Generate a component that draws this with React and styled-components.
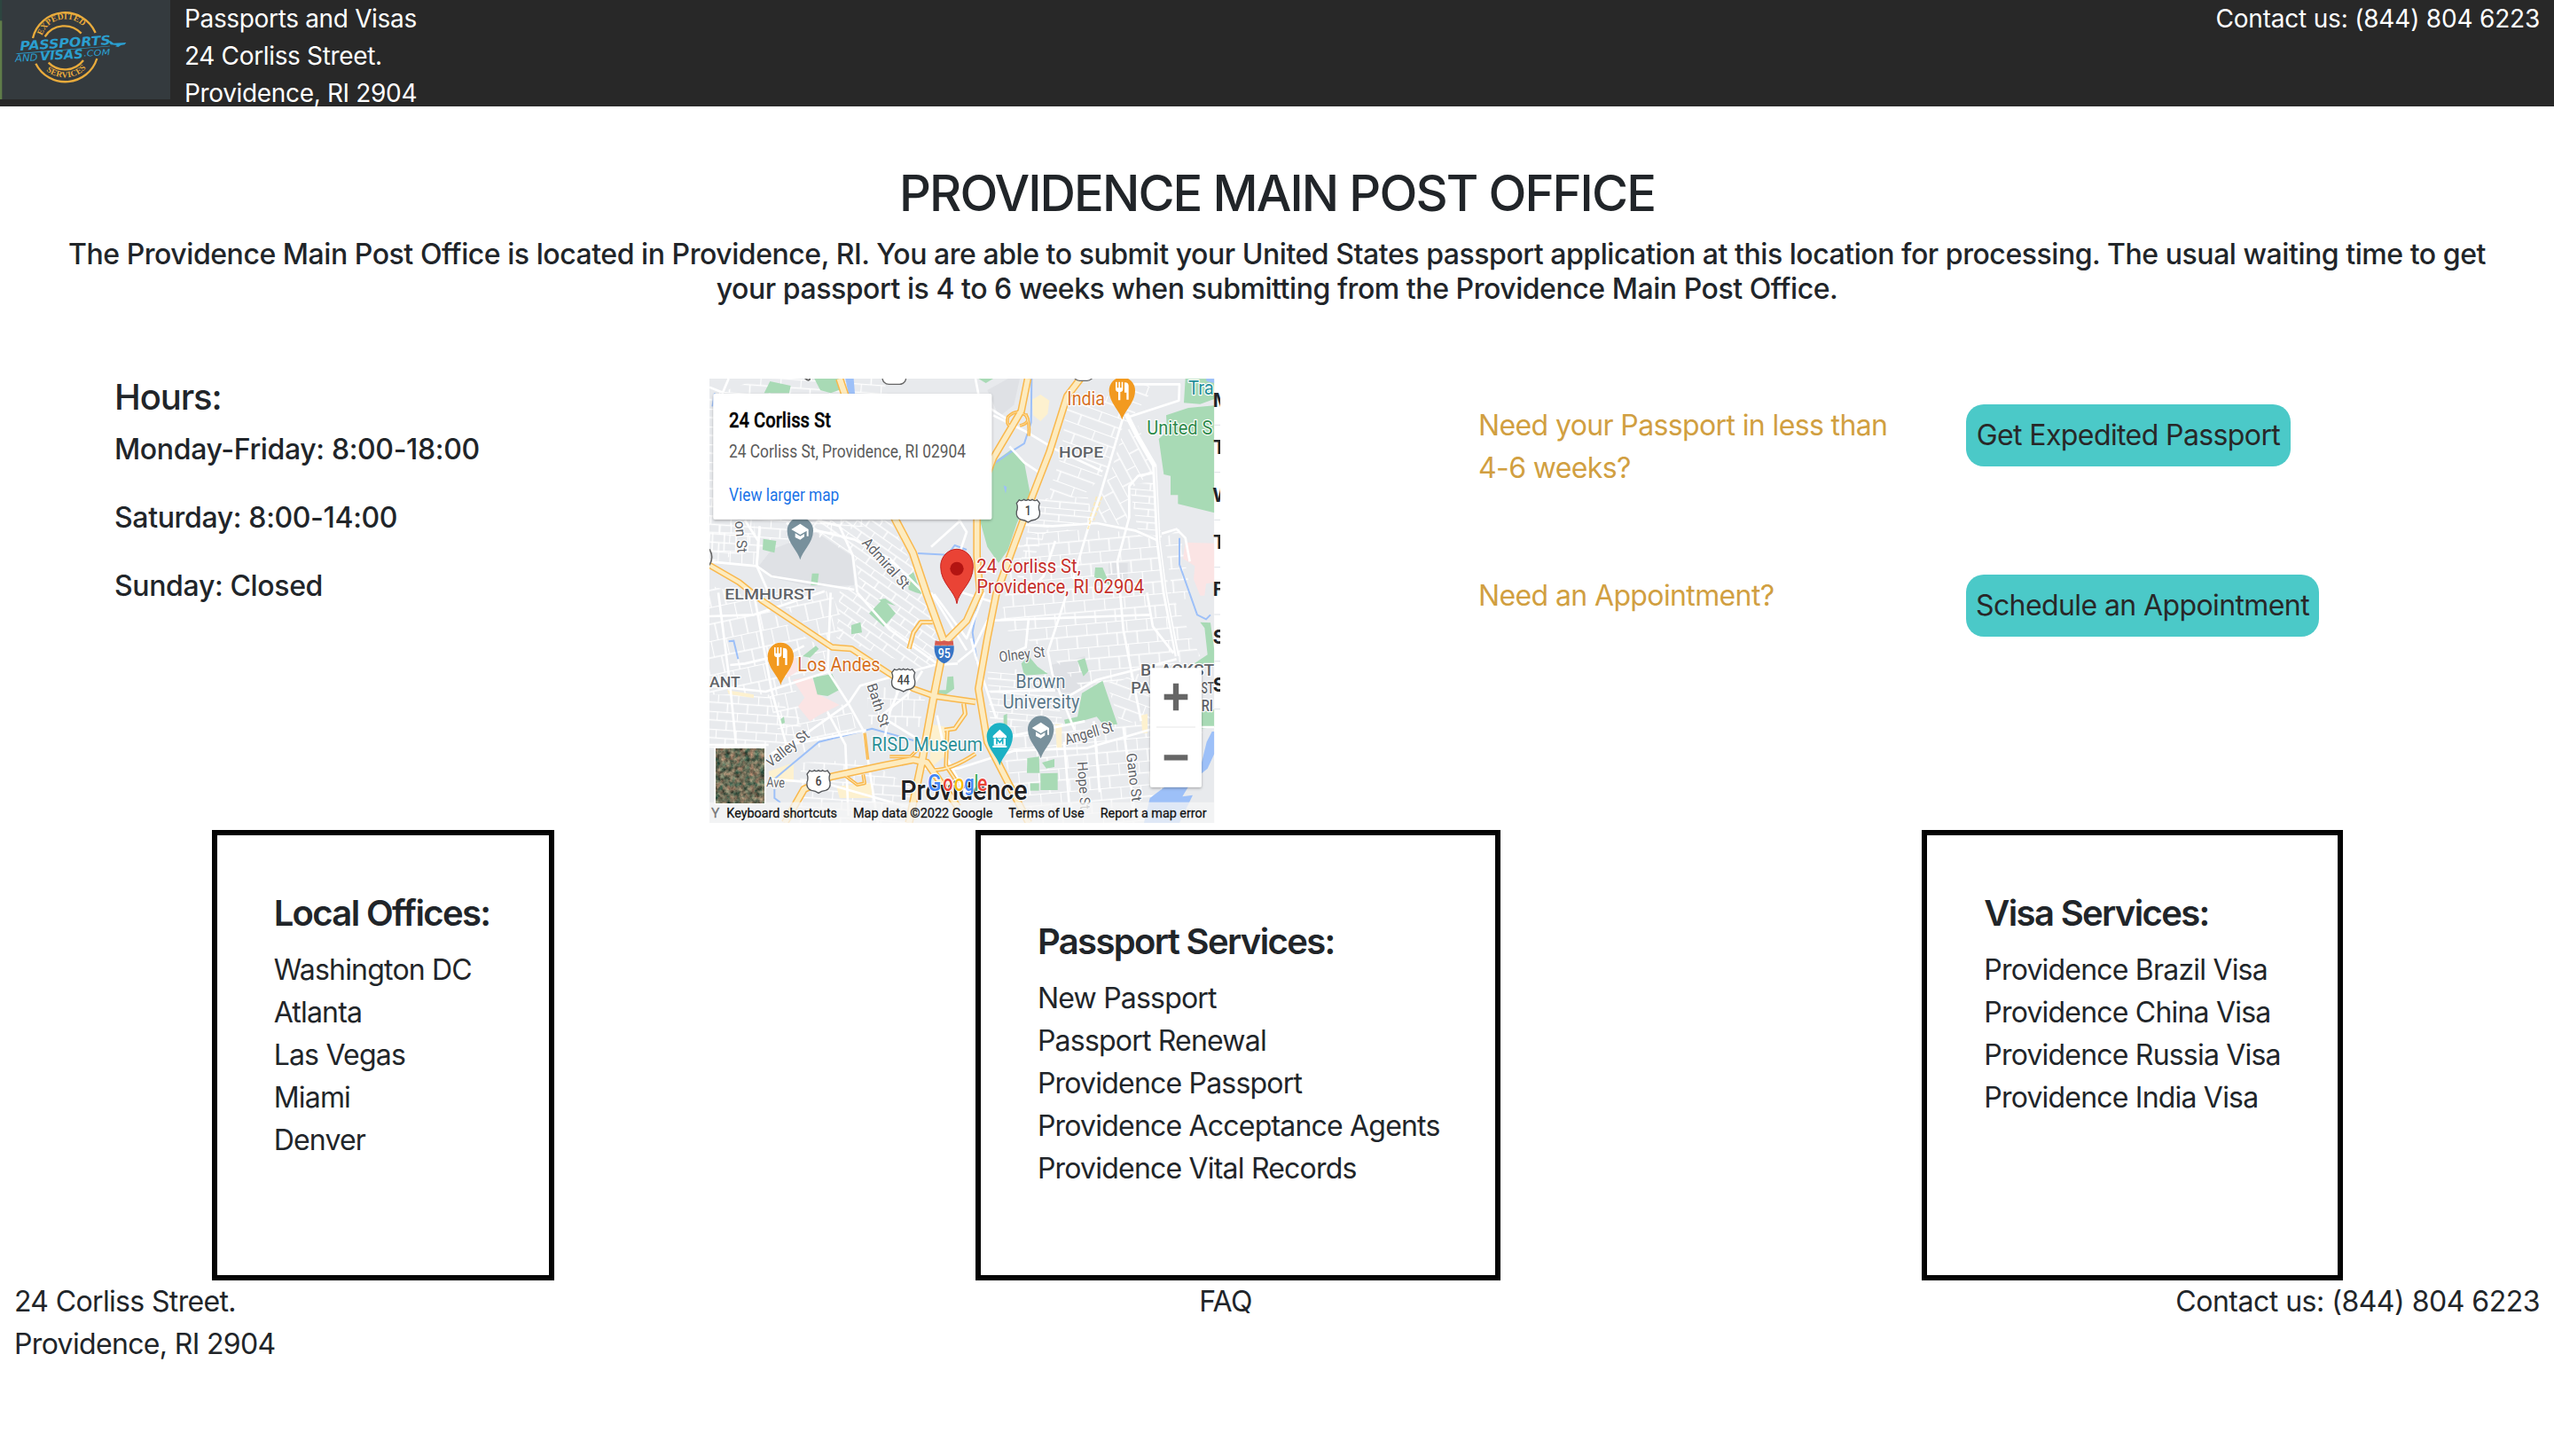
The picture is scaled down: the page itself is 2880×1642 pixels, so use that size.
import React from "react";
import styled, { createGlobalStyle } from "styled-components";

const GlobalStyle = createGlobalStyle`
  *, *::before, *::after { box-sizing: border-box; }
  body {
    margin: 0;
    background: #fff;
    color: #212529;
    font-family: Inter, "Liberation Sans", sans-serif;
    font-size: 32px;
    line-height: 1.5;
    letter-spacing: -0.6px;
  }
  h1, h2, h3, p, ul { margin: 0; padding: 0; font-weight: inherit; }
`;

const Header = styled.header`
  display: flex;
  align-items: flex-start;
  height: 120px;
  overflow: hidden;
  background: #282828;
  color: #fff;
  font-size: 28px;
  line-height: 42px;
  padding-right: 16px;
`;

const LogoArt = styled.svg`
  flex: none;
  width: 192px;
  height: 112px;
  margin-right: 16px;
`;

const Address = styled.div`
  flex: 1;
  white-space: pre-line;
  letter-spacing: ${(p) => p.$tracking}px;
`;

const Contact = styled.div`
  white-space: nowrap;
  letter-spacing: ${(p) => p.$tracking}px;
`;

const Hero = styled.section`
  padding: 65px 64px 15px;
  text-align: center;
`;

const PageTitle = styled.h1`
  font-size: 56px;
  font-weight: 500;
  line-height: 1.2;
  letter-spacing: -1.9px;
  margin-bottom: 16px;
`;

const Lead = styled.p`
  font-weight: 500;
  line-height: 1.2;
  letter-spacing: -0.45px;
  white-space: nowrap;
`;

const Info = styled.section`
  display: grid;
  grid-template-columns: 671px 867px 550px 1fr;
  height: 512px;
  padding: 0 0 0 129px;
  margin-top: 64px;
`;

const Hours = styled.div`
  font-weight: 500;
  line-height: 38.4px;
  letter-spacing: -0.35px;
`;

const HoursList = styled.div`
  display: grid;
  row-gap: 38.4px;
`;

const SectionTitle = styled.h2`
  font-size: 40px;
  font-weight: ${(p) => p.$weight || 600};
  line-height: 48px;
  letter-spacing: ${(p) => (p.$weight ? -1.1 : -1.65)}px;
  margin-bottom: 16px;
  white-space: nowrap;
`;

const MapArt = styled.svg`
  display: block;
  width: 576px;
  height: 501px;
  margin-top: 3px;
`;

const Stack = styled.div`
  display: grid;
  grid-template-rows: 192px auto;
  align-content: start;
  justify-items: start;
  padding-top: 32px;
`;

const Question = styled.p`
  width: 500px;
  color: #d19f41;
  letter-spacing: -0.62px;
`;

const Action = styled.button`
  width: ${(p) => p.$width}px;
  height: 70px;
  padding: 0;
  border: 0;
  border-radius: 20px;
  background: #4bc9c8;
  color: #282828;
  font: inherit;
  letter-spacing: -0.6px;
  white-space: nowrap;
`;

const Cards = styled.section`
  display: flex;
  justify-content: space-around;
  padding-left: 1px;
`;

const Card = styled.div`
  width: ${(p) => p.$width}px;
  height: 508px;
  padding: ${(p) => (p.$lowered ? 96 : 64)}px 0 0 64px;
  border: 6px solid #040404;
`;

const Links = styled.ul`
  list-style: none;
  white-space: nowrap;
  letter-spacing: -0.8px;
`;

const Footer = styled.footer`
  display: flex;
  justify-content: space-between;
  padding: 0 16px;
`;

const FooterAddress = styled(Address)`
  flex: none;
`;

const ROBOTO = "Roboto, sans-serif";

function Logo() {
  const blue = "#2b9fd0";
  const gold = "#e9ab3c";
  return (
    <LogoArt viewBox="0 0 576 336">
      <rect width="576" height="336" fill="#343a3e" />
      <rect width="7" height="70" fill="#2d4640" />
      <rect y="70" width="7" height="266" fill="#5f7c49" />
      <g fill="none" stroke={gold} strokeWidth="7">
        <path d="M111 129A112 112 0 0 1 323 111" />
        <path d="M152 124A78 78 0 0 1 275 113" />
        <path d="M121 215A112 112 0 0 0 328 198" />
        <path d="M164 212A78 78 0 0 0 282 204" />
      </g>
      <path id="logoTop" d="M142 121A84 84 0 0 1 294 106" fill="none" />
      <path id="logoBottom" d="M156 239A98 98 0 0 0 302 217" fill="none" />
      <g fill={gold} fontFamily="'Liberation Serif', serif" fontWeight="700" fontSize="29" letterSpacing="0">
        <text><textPath href="#logoTop" textLength="170">EXPEDITED</textPath></text>
        <text><textPath href="#logoBottom" textLength="150">SERVICES</textPath></text>
      </g>
      <g fill={blue} fontFamily="'DejaVu Sans', sans-serif" fontStyle="italic" letterSpacing="0">
        <g transform="rotate(-4 68 171)">
          <text x="68" y="171" fontSize="43" fontWeight="700" textLength="308" lengthAdjust="spacingAndGlyphs">PASSPORTS</text>
        </g>
        <g transform="rotate(-3 52 209)">
          <text x="52" y="209" fontSize="33" textLength="76" lengthAdjust="spacingAndGlyphs">AND</text>
          <text x="136" y="209" fontSize="43" fontWeight="700" textLength="146" lengthAdjust="spacingAndGlyphs">VISAS</text>
          <text x="284" y="203" fontSize="28" textLength="90" lengthAdjust="spacingAndGlyphs">.COM</text>
        </g>
        <path d="M52 181L372 155L372 157L60 183Z" />
        <path d="M374 150L366 139L374 139L384 146L427 144L422 151L409 153L400 159L390 157L396 153L374 151Z" />
      </g>
    </LogoArt>
  );
}

const PARKS = [
  "215,70 235,30 305,45 300,70", "385,21 470,21 468,60 440,70 405,60",
  "212,563 256,570 250,610 210,600", "377,680 400,680 395,720 373,720",
  "700,690 720,676 748,750 728,745 704,735", "940,21 990,21 965,36",
  "990,305 1050,262 1095,305 1115,410 1070,510 1040,600 1008,645 970,590 945,500 935,360",
  "1640,21 1738,21 1738,90 1690,107 1635,103",
  "1575,145 1650,120 1738,112 1738,475 1615,445 1615,415 1590,415 1590,350 1567,345 1550,225 1578,200",
  "1335,660 1360,660 1385,720 1332,692",
  "570,815 618,765 660,815 620,860", "510,855 541,845 546,880 510,886",
  "380,1032 445,1020 468,1075 430,1095 395,1090", "264,1178 282,1165 285,1185 275,1190",
  "805,1075 830,1075 835,1030 855,1028 858,1070 830,1090 800,1085",
  "345,960 390,925 400,935 370,965", "600,770 625,765 660,790",
  "1085,985 1110,960 1140,995 1175,1020 1095,1025", "1275,975 1300,967 1312,1010 1295,1028",
  "1230,1175 1275,1165 1290,1085 1360,1043 1410,1190 1365,1195 1340,1165 1235,1195",
  "1690,845 1725,847 1738,940 1738,990 1670,985 1715,955 1705,865",
  "1105,1305 1145,1300 1147,1355 1104,1355", "1150,1357 1208,1355 1208,1413 1150,1413",
  "1115,1390 1145,1390 1145,1415 1115,1415", "1155,1320 1197,1308 1197,1335 1170,1340",
  "1695,1150 1738,1140 1738,1200 1695,1205", "1025,1160 1037,1155 1037,1195 1025,1195",
];

const BLOCKS = [
  ["gA", "30,80 200,21 620,21 660,200 640,500 30,640"],
  ["gB", "290,500 640,500 760,740 800,900 540,720 520,620"],
  ["gC", "30,520 180,500 200,650 30,640"],
  ["gD", "30,720 170,760 330,880 440,950 380,1010 230,1090 30,1090"],
  ["gA", "30,1090 230,1090 350,1180 300,1260 30,1280"],
  ["gD", "230,1100 310,1020 340,1150 500,1120 530,1200 360,1290 270,1240"],
  ["gB", "470,740 560,700 800,900 780,1010 600,950 460,900"],
  ["gC", "560,1050 760,1100 740,1200 570,1190"],
  ["gD", "220,740 440,740 490,860 440,920 340,840"],
  ["gE", "1240,80 1400,80 1500,30 1530,60 1420,200 1380,330 1290,420 1170,430 1220,280"],
  ["gF", "1430,200 1480,180 1540,330 1460,390 1440,520 1320,500 1390,330"],
  ["gG", "1130,430 1310,420 1330,510 1180,520 1090,700 1070,700"],
  ["gH", "1080,560 1180,530 1460,540 1540,570 1590,740 1690,960 1300,1080 1160,930 1010,860 1040,700"],
  ["gG", "1450,380 1530,370 1560,560 1480,540"],
  ["gH", "1570,560 1620,530 1660,760 1600,780"],
  ["gE", "1300,1070 1590,990 1610,1160 1420,1190 1370,1040"],
  ["gG", "970,1000 1180,1010 1230,1200 980,1200"],
  ["gH", "1040,1200 1700,1170 1690,1340 1560,1420 1520,1524 1110,1524 1030,1320"],
  ["gA", "340,1320 560,1310 740,1420 720,1524 330,1524"],
];

const STREETS = [
  "M30 50L75 68 95 21", "M30 640L190 655 230 745", "M200 520L190 655 240 690 520 735",
  "M290 510L520 565 640 630 760 750", "M395 500L470 520 515 620 530 745", "M150 500L195 570 190 660",
  "M30 825L180 820 420 740", "M180 745L240 1075 290 1260", "M60 745L100 1060 120 1260",
  "M100 990L150 985 300 950 350 925", "M30 1060L220 1080 440 1010", "M440 745L430 1010 500 1120 550 1210 600 1524",
  "M500 1120L360 1220 240 1290", "M500 1120L540 1060 790 990 870 985", "M530 745L640 870 800 985",
  "M790 750L900 900 960 745", "M780 745L900 940", "M700 1000L640 1150 620 1250", "M750 1010L700 1090 600 1170",
  "M300 1260L560 1210", "M430 1150L490 1260 500 1500", "M30 1260L230 1260", "M230 1375L420 1390 700 1470",
  "M740 1340L870 1340 1060 1280 1310 1270 1550 1200 1738 1200", "M800 1160L830 1300 900 1430",
  "M620 1170L800 1280", "M780 590L880 500", "M870 490L900 540 870 630 1000 680", "M870 740L1000 780",
  "M990 145L1060 180 1100 200 1200 260 1360 335", "M1045 250L1095 305 1155 345", "M1085 515L1190 520 1340 510 1470 535 1550 570",
  "M1450 40L1620 40 1618 95 1450 150", "M1430 150L1350 420 1310 530 1260 700", "M1530 340L1480 350 1450 385 1450 490 1410 640 1430 870 1490 1180",
  "M930 21L945 100 1040 160", "M870 980L920 940 970 840 1240 830 1520 820", "M915 900L930 960 1000 1170",
  "M1240 745L1175 945 1190 1020 1265 1210", "M1220 1110L1340 1040 1610 970", "M1000 1240L1300 1180",
  "M1230 1250L1250 1500", "M1430 1200L1470 1500", "M1330 1180L1350 1420", "M1560 545L1610 530 1640 560 1655 640",
  "M1110 830L1100 930 1010 970", "M980 1080L1200 1075", "M1200 570L1160 690 1100 750", "M1510 745L1530 860 1600 950",
];

const RIVERS = [
  "M245 1380L280 1350 400 1250 580 1205 720 1245", "M250 1410L250 1440 270 1455", "M1120 21L1118 170 1095 240 1060 262 990 310",
  "M735 612L835 617 860 585 900 600", "M1620 560L1620 650 1680 820 1710 835 1725 820", "M95 910L112 908 127 970", "M40 115L48 70",
  "M945 740L920 880 935 980",
];

const HIGHWAYS = [
  ["M470 21L490 80 570 300 660 500 718 610 765 750 825 915 790 1090 750 1310 705 1524", 24],
  ["M1285 21L1240 80 1180 270 1110 450 1040 640 1000 750 970 900 940 1070 970 1250 1110 1524", 22],
  ["M1107 21L1085 130 990 290 940 420 935 500 935 620 945 740 900 840 825 915", 22],
  ["M30 652L130 710 205 770 445 930 510 935 640 1020 720 1070 790 1095 930 1115", 18],
  ["M285 1524L350 1410 440 1368 620 1330 720 1310 765 1320 870 1470", 22],
  ["M705 935L720 880 745 845 785 845", 12], ["M825 1210L860 1205 895 1155 890 1120", 12],
  ["M555 1220L566 1310", 6], ["M490 1365L530 1395 555 1390 550 1360", 8],
  ["M1065 180Q1030 190 1040 150Q1070 120 1100 145Q1120 170 1080 180", 7],
  ["M1100 140Q1115 170 1110 215", 7], ["M930 1290Q840 1350 780 1345", 10], ["M640 1300L710 1300 740 1270", 8],
  ["M835 1210L830 1330 870 1390", 10],
];

const TEXTS = [
  { t: "ELMHURST", x: 82, y: 767, w: 304, s: 52, c: "#5f6368", f: 500 },
  { t: "HOPE", x: 1212, y: 287, w: 150, s: 50, c: "#5f6368", f: 500 },
  { t: "ANT", x: 30, y: 1065, w: 104, s: 52, c: "#5f6368", f: 500 },
  { t: "BLACKST", x: 1488, y: 1025, w: 250, s: 54, c: "#5f6368", f: 500 },
  { t: "PARK", x: 1456, y: 1086, w: 136, s: 54, c: "#5f6368", f: 500 },
  { t: "EAST", x: 1652, y: 1086, w: 84, s: 54, c: "#5f6368", f: 500 },
  { t: "RI", x: 1694, y: 1145, w: 40, s: 54, c: "#5f6368", f: 500 },
  { t: "India", x: 1240, y: 111, w: 128, s: 64, c: "#d6701f" },
  { t: "Los Andes", x: 328, y: 1010, w: 280, s: 64, c: "#d6701f" },
  { t: "Tra", x: 1650, y: 74, w: 86, s: 64, c: "#1f8f99" },
  { t: "United S", x: 1510, y: 210, w: 222, s: 64, c: "#2e8a4b" },
  { t: "RISD Museum", x: 578, y: 1282, w: 376, s: 64, c: "#2a8f97" },
  { t: "Brown", x: 1066, y: 1068, w: 168, s: 64, c: "#5a7789" },
  { t: "University", x: 1022, y: 1138, w: 260, s: 64, c: "#5a7789" },
  { t: "24 Corliss St,", x: 934, y: 677, w: 352, s: 66, c: "#c5302b" },
  { t: "Providence, RI 02904", x: 934, y: 747, w: 566, s: 66, c: "#c5302b" },
  { t: "Olney St", x: 1012, y: 980, w: 156, s: 50, c: "#5f6368", r: -7 },
  { t: "Angell St", x: 1238, y: 1260, w: 168, s: 52, c: "#5f6368", r: -16 },
  { t: "Hope St", x: 1274, y: 1318, w: 162, s: 48, c: "#5f6368", r: 86 },
  { t: "Gano St", x: 1440, y: 1290, w: 164, s: 48, c: "#5f6368", r: 83 },
  { t: "Admiral St", x: 544, y: 578, w: 212, s: 50, c: "#5f6368", r: 48 },
  { t: "Bath St", x: 562, y: 1058, w: 152, s: 48, c: "#5f6368", r: 72 },
  { t: "Valley St", x: 236, y: 1338, w: 172, s: 50, c: "#5f6368", r: -38 },
  { t: "Ave", x: 222, y: 1402, w: 62, s: 48, c: "#5f6368", r: 3 },
  { t: "on St", x: 116, y: 504, w: 108, s: 48, c: "#5f6368", r: 85 },
  { t: "Providence", x: 676, y: 1446, w: 430, s: 94, c: "#202124", f: 500 },
];

const BAR_TEXTS = [
  ["Y", 36, 28, "#777"],
  ["Keyboard shortcuts", 88, 374, "#111"],
  ["Map data ©2022 Google", 516, 472, "#111"],
  ["Terms of Use", 1042, 256, "#111"],
  ["Report a map error", 1352, 360, "#111"],
];

const DAYS = [["M", 118, 1733], ["T", 277, 1734], ["W", 437, 1732], ["T", 597, 1734], ["F", 757, 1733], ["S", 918, 1733], ["S", 1080, 1733]];

const GRIDS = [
  ["gA", 4, 34, 30], ["gB", 35, 36, 26], ["gC", 2, 20, 60], ["gD", -12, 26, 56],
  ["gE", 20, 60, 34], ["gF", 62, 44, 36], ["gG", 5, 50, 22], ["gH", -5, 34, 40],
];

function Pin({ x, y, color, icon }) {
  return (
    <g transform={`translate(${x} ${y})`}>
      <path d="M0 0C-6 -28 -44 -58 -44 -98A44 46 0 0 1 44 -98C44 -58 6 -28 0 0Z" fill={color} />
      <g fill="#fff" stroke="none">
        {icon === "food" && (
          <path d="M-22 -124h5v20h5v-20h5v20h5v-20h5v24q0 8 -9 10v28h-7v-28q-9 -2 -9 -10zM8 -122q14 0 14 10v48h-7v-24h-7z" transform="translate(0 -4)" />
        )}
        {icon === "school" && (
          <g>
            <path d="M-30 -103L0 -122 28 -103V-80h-6v-18L0 -85Z" />
            <path d="M-17 -90L0 -80 14 -88V-78L0 -68 -17 -76Z" />
          </g>
        )}
        {icon === "museum" && (
          <g>
            <path d="M-23 -100L0 -122 23 -100V-94H-23ZM-20 -92H20V-68H-20Z" />
            <path d="M-24 -67H24V-61H-24Z" />
            <path d="M-10 -72V-90L0 -78 10 -90V-72" fill="none" stroke={color} strokeWidth="5" />
          </g>
        )}
      </g>
    </g>
  );
}

function Shield({ x, y, n }) {
  return (
    <g transform={`translate(${x} ${y})`}>
      <path d="M-30 -37Q-22 -31 -14 -38Q-7 -32 0 -38Q7 -32 14 -38Q22 -31 30 -37L39 -25Q33 -12 39 2Q42 24 24 30Q10 32 0 39Q-10 32 -24 30Q-42 24 -39 2Q-33 -12 -39 -25Z" fill="#fff" stroke="#55585c" strokeWidth="4" />
      <text x="0" y="15" fontSize="42" fontWeight="500" fill="#444" textAnchor="middle" textLength={n.length * 21} lengthAdjust="spacingAndGlyphs">{n}</text>
    </g>
  );
}

function OfficeMap() {
  return (
    <MapArt viewBox="30 21 1728 1503" fontFamily={ROBOTO} letterSpacing="0">
      <defs>
        {GRIDS.map(([id, angle, w, h]) => (
          <pattern key={id} id={id} width={w * 2} height={h * 2} patternUnits="userSpaceOnUse" patternTransform={`rotate(${angle})`}>
            <path d={`M0 1H${w * 2}M0 ${h}H${w * 2}M1 0V${h}M${w} ${h}V${h * 2}`} stroke="#fff" strokeWidth="4.5" fill="none" />
          </pattern>
        ))}
        <clipPath id="tiles"><rect x="30" y="21" width="1708" height="1503" /></clipPath>
        <filter id="terrain" x="0" y="0" width="100%" height="100%" colorInterpolationFilters="sRGB">
          <feTurbulence type="fractalNoise" baseFrequency="0.06" numOctaves="4" seed="8" />
          <feColorMatrix values="0.9 0 0 0 -0.02  0.6 0.3 0 0 -0.02  0.5 0.25 0 0 -0.03  0 0 0 0 1" />
        </filter>
        <filter id="cardShadow" x="-5%" y="-10%" width="110%" height="125%">
          <feDropShadow dx="0" dy="4" stdDeviation="5" floodOpacity="0.3" />
        </filter>
      </defs>
      <g clipPath="url(#tiles)">
        <rect x="30" y="21" width="1708" height="1503" fill="#e8eaed" />
        <g fill="#dfe1e5">
          <path d="M240 600L390 540 510 620 520 720 380 725 240 695 197 655Z" />
          <path d="M1185 990L1300 960 1320 1040 1270 1085 1200 1080Z" />
          <path d="M970 60L1040 21 1080 21 1060 110 1010 150Z" />
          <path d="M1380 645H1445V710H1380Z" />
        </g>
        {BLOCKS.map(([id, points], i) => <polygon key={i} points={points} fill={`url(#${id})`} />)}
        <g fill="#fdf1cf">
          <path d="M1122 92L1150 75 1180 95 1174 140 1150 165 1125 145Z" />
          <path d="M230 1350L315 1320V1385H235Z" />
          <path d="M1200 1190H1222V1270H1205Z" />
          <path d="M1490 1160L1512 1155V1220H1495Z" />
          <path d="M780 1190L835 1200 825 1300 775 1340Z" />
          <path d="M460 1400L580 1390 580 1440 470 1440Z" />
          <path d="M90 1075L180 1090V1102L95 1088Z" />
        </g>
        <g fill="#fbe4e4">
          <path d="M312 1040L375 1028 400 1090 470 1125 400 1160 370 1180 330 1130 352 1100Z" />
          <path d="M290 990L320 960 330 1010 290 1035Z" />
          <path d="M1640 575L1738 578V710L1710 715 1705 755H1690L1668 700 1672 655 1632 630Z" />
        </g>
        <g fill="#a8dab5">{PARKS.map((p) => <polygon key={p} points={p} />)}</g>
        <g fill="#9dc0f8">
          <path d="M490 21H518L522 72H500Z" />
          <path d="M1710 21H1738V36L1712 30Z" />
          <path d="M1520 1440L1580 1395 1690 1340 1712 1250 1730 1215H1738V1290L1715 1340 1660 1385 1630 1435 1665 1430 1620 1524H1500Z" />
          <path d="M1025 382L1036 388 1032 410Z" />
        </g>
        <g fill="none" stroke="#9dc0f8" strokeWidth="6">{RIVERS.map((d) => <path key={d} d={d} />)}</g>
        <g fill="none" stroke="#fff" strokeWidth="8" strokeLinejoin="round">{STREETS.map((d) => <path key={d} d={d} />)}</g>
        <path d="M1440 140L1480 220 1535 315 1548 570 1570 745 1612 960" fill="none" stroke="#fff" strokeWidth="16" />
        <path d="M1538 320L1550 570 1572 745 1612 960" fill="none" stroke="#e8eaed" strokeWidth="3" />
        <path d="M1340 420L1315 500M1358 420L1330 500M1320 500L1310 530" stroke="#fdeab8" strokeWidth="5" strokeDasharray="14 5" />
        <g fill="none" stroke="#f9b84d" strokeLinejoin="round">
          {HIGHWAYS.map(([d, w]) => <path key={d} d={d} strokeWidth={w + 4} />)}
        </g>
        <g fill="none" stroke="#fdebbf" strokeLinejoin="round">
          {HIGHWAYS.map(([d, w]) => <path key={d} d={d} strokeWidth={w - 5} />)}
        </g>

        <rect x="615" y="-30" width="80" height="70" rx="22" fill="#fff" stroke="#666" strokeWidth="4" />
        <rect x="1262" y="-30" width="66" height="58" rx="20" fill="#fff" stroke="#666" strokeWidth="4" />
        <path d="M352 18Q368 34 370 20" stroke="#666" strokeWidth="6" fill="none" />
        <path d="M30 598Q46 625 30 652" stroke="#666" strokeWidth="5" fill="none" />

        {TEXTS.map(({ t, x, y, w, s, c, f = 400, r = 0 }) => (
          <text key={t + y} x={x} y={y} fontSize={s} fontWeight={f} fill={c} stroke="#fff" strokeWidth="7" strokeLinejoin="round" paintOrder="stroke"
            textLength={w} lengthAdjust="spacingAndGlyphs" transform={`rotate(${r} ${x} ${y})`}>{t}</text>
        ))}

        <Shield x={1108} y={468} n="1" />
        <Shield x={686} y={1041} n="44" />
        <Shield x={399} y={1384} n="6" />
        <g transform="translate(824 945)">
          <path d="M-30 -38Q-15 -32 0 -38Q15 -32 30 -38L32 -22H-32Z" fill="#d65a50" />
          <path d="M-33 -20H33Q36 26 0 40Q-36 26 -33 -20Z" fill="#3674c5" />
          <text x="0" y="21" fill="#fff" fontSize="42" fontWeight="500" textAnchor="middle" textLength="42" lengthAdjust="spacingAndGlyphs">95</text>
        </g>

        <Pin x={337} y={634} color="#78909c" icon="school" />
        <Pin x={1426} y={160} color="#f29a20" icon="food" />
        <Pin x={271} y={1058} color="#f29a20" icon="food" />
        <Pin x={1012} y={1330} color="#1bb1c4" icon="museum" />
        <Pin x={1151} y={1306} color="#78909c" icon="school" />

        <path d="M867 782C862 740 812 715 812 656A55 58 0 0 1 922 656C922 715 872 740 867 782Z" fill="#ea4335" stroke="#c5221f" strokeWidth="3" />
        <circle cx="867" cy="664" r="23" fill="#b31412" />

        <rect x="43" y="72" width="942" height="425" rx="6" fill="#fff" filter="url(#cardShadow)" />
        <text x="96" y="186" fontSize="70" fontWeight="500" fill="#000" stroke="#000" strokeWidth="1" textLength="345" lengthAdjust="spacingAndGlyphs">24 Corliss St</text>
        <text x="96" y="289" fontSize="61" fill="#5b5b5b" textLength="801" lengthAdjust="spacingAndGlyphs">24 Corliss St, Providence, RI 02904</text>
        <text x="96" y="434" fontSize="61" fill="#1a73e8" textLength="373" lengthAdjust="spacingAndGlyphs">View larger map</text>

        <rect x="1521" y="1000" width="174" height="403" rx="6" fill="#fff" filter="url(#cardShadow)" />
        <path d="M1542 1200H1674" stroke="#e6e6e6" strokeWidth="3" />
        <path d="M1568 1098H1648M1608 1052V1144M1568 1303H1648" stroke="#666" strokeWidth="19" />

        <g fontSize="78" fontWeight="500" stroke="#fff" strokeWidth="6" paintOrder="stroke">
          {[["G", 768, "#4285f4", 46], ["o", 820, "#ea4335", 34], ["o", 858, "#fbbc05", 34], ["g", 892, "#4285f4", 34], ["l", 927, "#34a853", 12], ["e", 936, "#ea4335", 34]].map(([ch, x, c, w]) => (
            <text key={x} x={x} y="1417" fill={c} textLength={w} lengthAdjust="spacingAndGlyphs">{ch}</text>
          ))}
        </g>

        <rect x="30" y="1454" width="1708" height="70" fill="#f5f5f5" fillOpacity="0.75" />
        <rect x="46" y="1264" width="176" height="198" rx="6" fill="#fff" />
        <rect x="53" y="1272" width="162" height="184" filter="url(#terrain)" />
        {BAR_TEXTS.map(([t, x, w, c]) => (
          <text key={t} x={x} y="1507" fontSize="46" fill={c} stroke={c} strokeWidth="0.8" textLength={w} lengthAdjust="spacingAndGlyphs">{t}</text>
        ))}
      </g>

      <path d="M1738 178H1758M1738 338H1758M1738 499H1758M1738 659H1758M1738 819H1758M1738 977H1758M1738 1139H1758" stroke="#dee2e6" strokeWidth="3" />
      <g fontFamily="Inter, sans-serif" fontWeight="700" fontSize="63" fill="#212529">
        {DAYS.map(([d, y, x]) => <text key={y} x={x} y={y}>{d}</text>)}
      </g>
    </MapArt>
  );
}

const CARDS = [
  { title: "Local Offices:", width: 386, items: ["Washington DC", "Atlanta", "Las Vegas", "Miami", "Denver"] },
  { title: "Passport Services:", width: 592, lowered: true, items: ["New Passport", "Passport Renewal", "Providence Passport", "Providence Acceptance Agents", "Providence Vital Records"] },
  { title: "Visa Services:", width: 475, items: ["Providence Brazil Visa", "Providence China Visa", "Providence Russia Visa", "Providence India Visa"] },
];

export default function App() {
  return (
    <>
      <GlobalStyle />
      <Header>
        <Logo />
        <Address $tracking={-0.34}>{"Passports and Visas\n24 Corliss Street.\nProvidence, RI 2904"}</Address>
        <Contact $tracking={-0.2}>Contact us: (844) 804 6223</Contact>
      </Header>
      <Hero>
        <PageTitle>PROVIDENCE MAIN POST OFFICE</PageTitle>
        <Lead>
          The Providence Main Post Office is located in Providence, RI. You are able to submit your United States passport application at this location for processing. The usual waiting time to get
          <br />
          your passport is 4 to 6 weeks when submitting from the Providence Main Post Office.
        </Lead>
      </Hero>
      <Info>
        <Hours>
          <SectionTitle $weight={500}>Hours:</SectionTitle>
          <HoursList>
            <div>Monday-Friday: 8:00-18:00</div>
            <div>Saturday: 8:00-14:00</div>
            <div>Sunday: Closed</div>
          </HoursList>
        </Hours>
        <OfficeMap />
        <Stack>
          <Question>Need your Passport in less than<br />4-6 weeks?</Question>
          <Question>Need an Appointment?</Question>
        </Stack>
        <Stack>
          <Action $width={366}>Get Expedited Passport</Action>
          <Action $width={398}>Schedule an Appointment</Action>
        </Stack>
      </Info>
      <Cards>
        {CARDS.map((c) => (
          <Card key={c.title} $width={c.width} $lowered={c.lowered}>
            <SectionTitle>{c.title}</SectionTitle>
            <Links>{c.items.map((i) => <li key={i}>{i}</li>)}</Links>
          </Card>
        ))}
      </Cards>
      <Footer>
        <FooterAddress $tracking={-0.65}>{"24 Corliss Street.\nProvidence, RI 2904"}</FooterAddress>
        <div>FAQ</div>
        <Contact $tracking={-0.5}>Contact us: (844) 804 6223</Contact>
      </Footer>
    </>
  );
}
